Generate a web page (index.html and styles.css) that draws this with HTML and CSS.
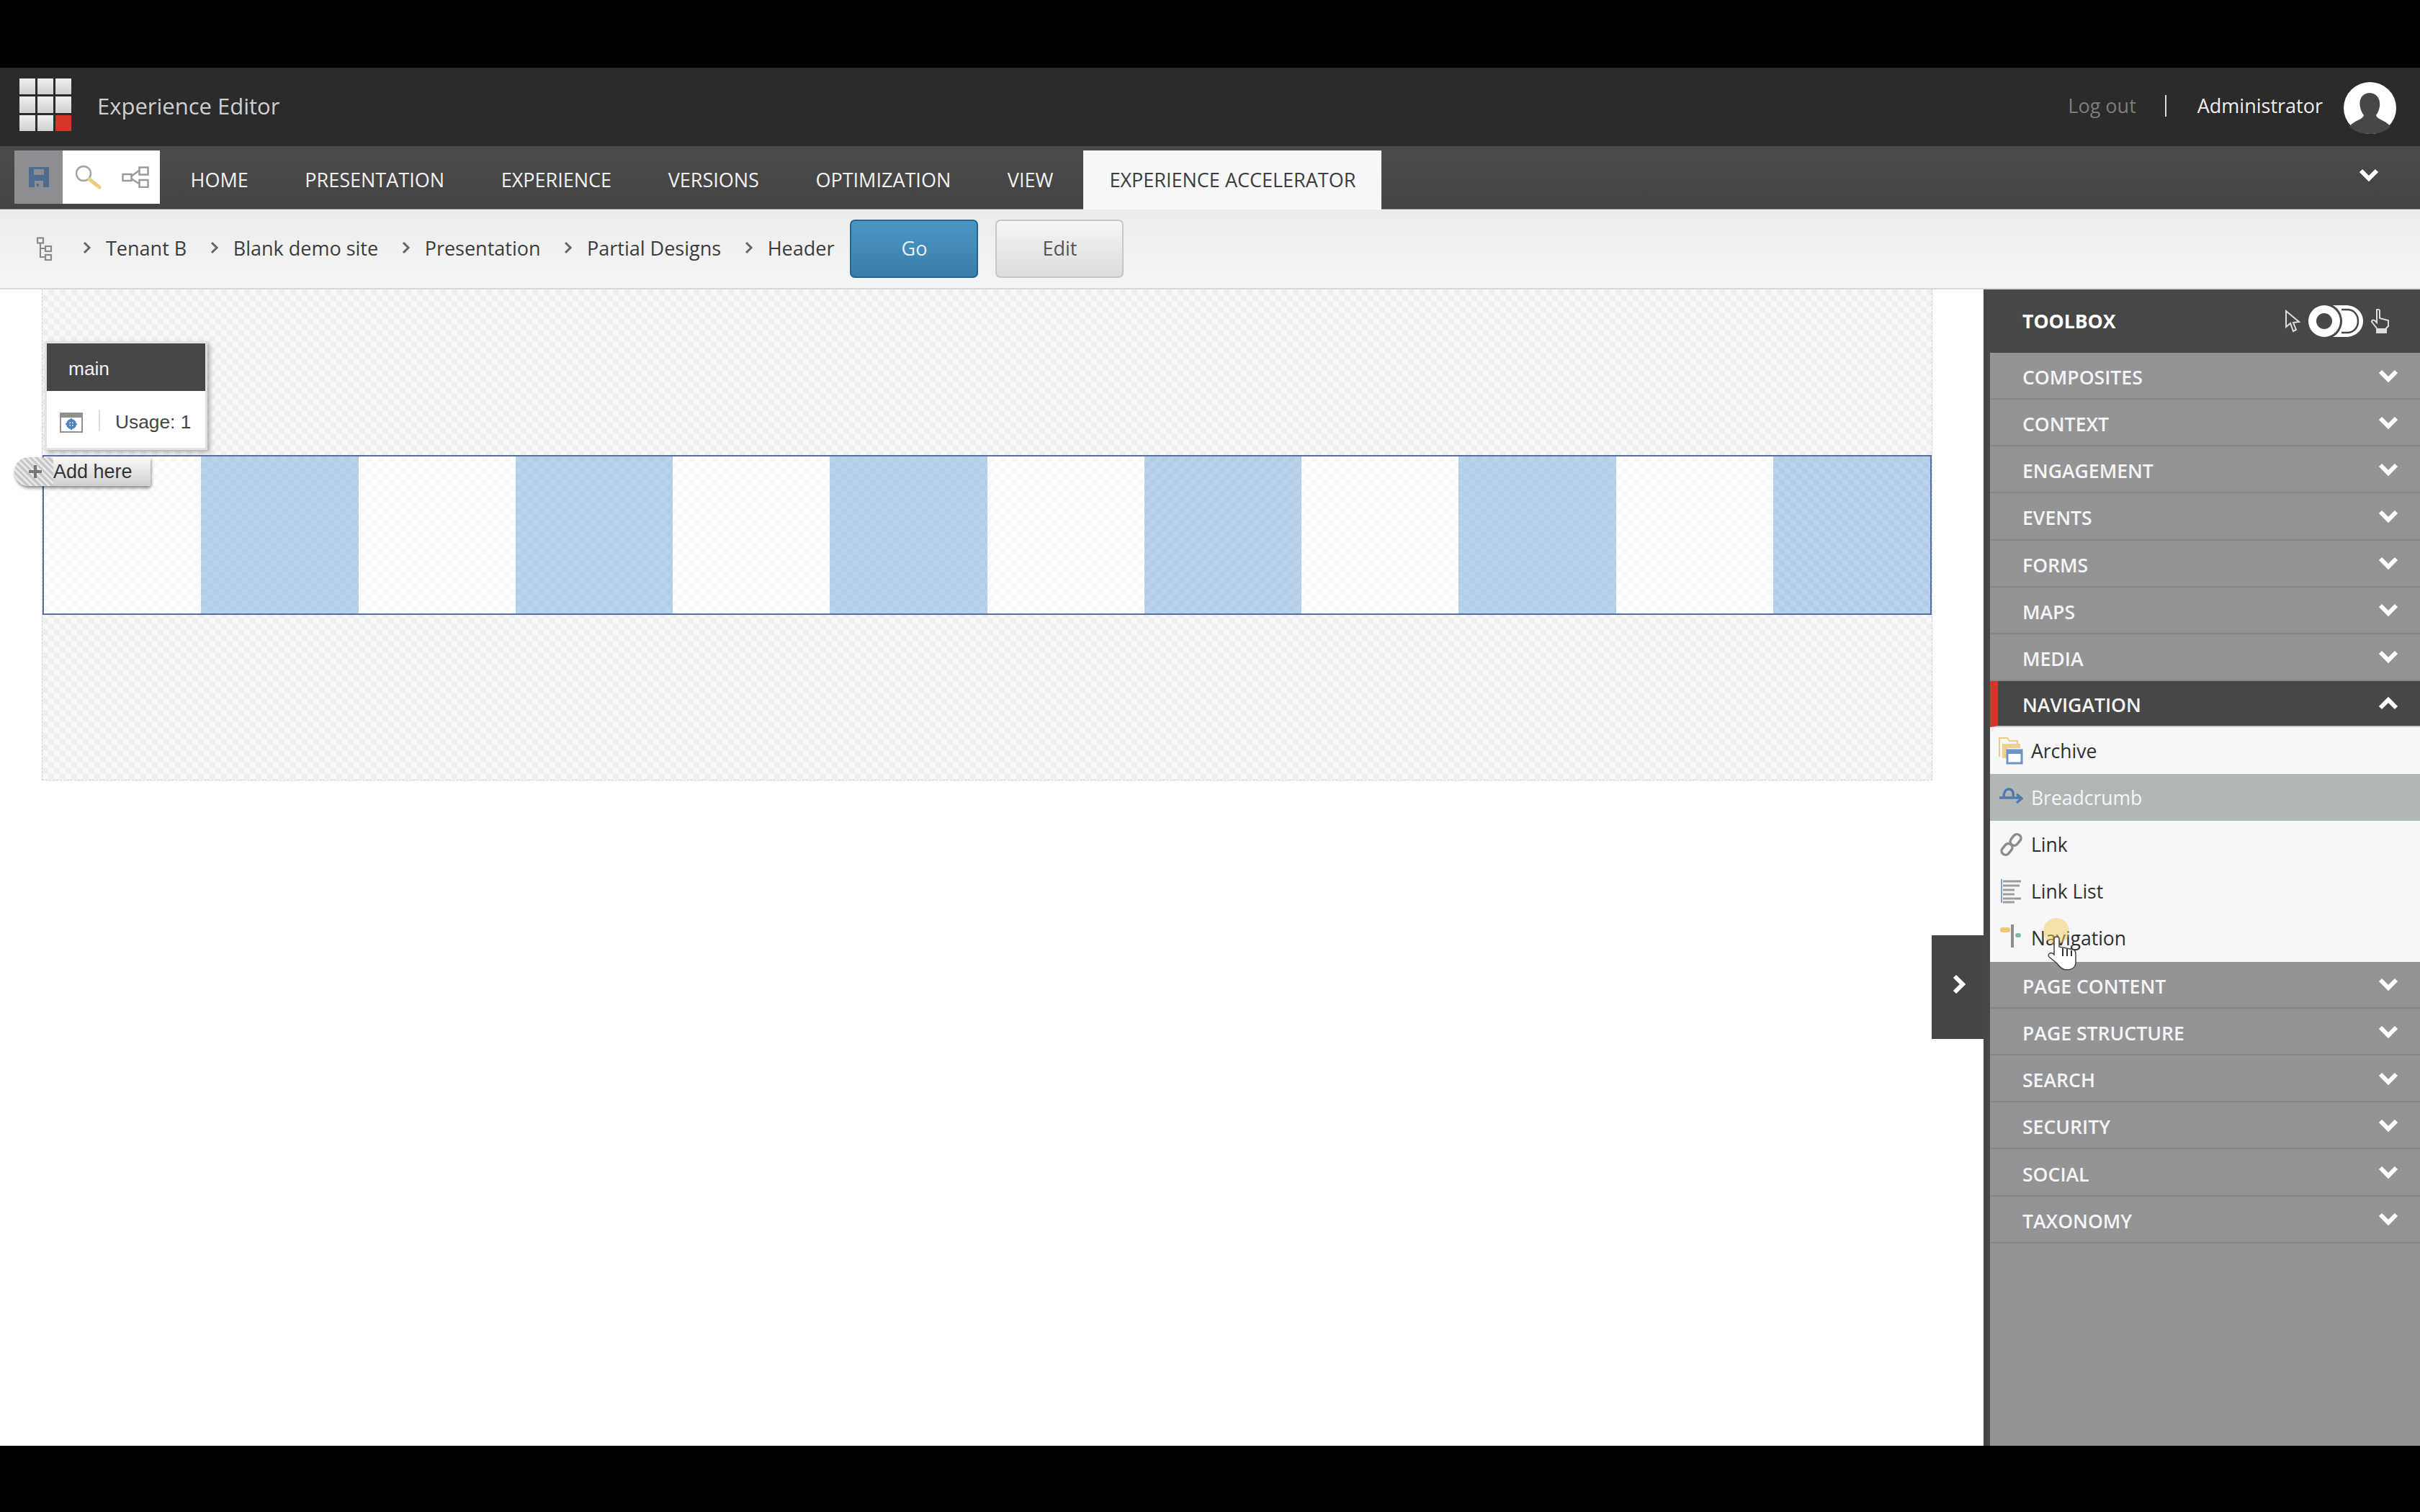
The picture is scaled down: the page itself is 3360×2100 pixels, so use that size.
FILE: index.html
```html
<!DOCTYPE html>
<html>
<head>
    <meta charset="utf-8">
    <title>Experience Editor</title>
    <link rel="stylesheet" href="styles.css">
</head>
<body>
    <svg class="sprites" width="0" height="0">
        <symbol id="chevDown" viewBox="0 0 28 20"><path d="M3 4 L14 15 L25 4" fill="none" stroke="#fff" stroke-width="6"/></symbol>
        <symbol id="chevUp" viewBox="0 0 28 20"><path d="M3 16 L14 5 L25 16" fill="none" stroke="#fff" stroke-width="6"/></symbol>
        <symbol id="crumbArrow" viewBox="0 0 14 18"><path d="M3 2 L10 9 L3 16" fill="none" stroke="#666" stroke-width="3"/></symbol>
    </svg>

    <div class="app">
        <header class="topBar">
            <div class="logo">
                <i></i><i></i><i></i><i></i><i></i><i></i><i></i><i></i><i class="red"></i>
            </div>
            <span class="appTitle">Experience Editor</span>
            <div class="userArea">
                <a class="logout">Log out</a>
                <span class="pipe"></span>
                <span class="userName">Administrator</span>
                <svg class="avatar" viewBox="0 0 73 72">
                    <ellipse cx="36.5" cy="36" rx="36.5" ry="36" fill="#fff"/>
                    <path d="M8 62 C14 53 26 53 28 46 C20 36 19 16 36 15 C53 16 53 36 45 46 C47 53 59 53 65 62 C58 69 47 72 36.500 72 C26 72 15 69 8 62 Z" fill="#474747"/>
                </svg>
            </div>
        </header>

        <nav class="ribbon">
            <div class="quickBar">
                <div class="quickSave">
                    <svg width="28" height="28" viewBox="0 0 28 28">
                        <path d="M0 0 H28 V28 H20 V19 H8 V28 H0 Z M7 3 V11 H21 V3 Z" fill="#4f6d90" fill-rule="evenodd"/>
                        <rect x="11" y="23" width="3" height="4" fill="#4f6d90"/>
                    </svg>
                </div>
                <div class="quickTools">
                    <svg width="36" height="34" viewBox="0 0 36 34">
                        <circle cx="11" cy="12" r="10" fill="none" stroke="#a3a3a3" stroke-width="2.500"/>
                        <path d="M19 20 L33 31" stroke="#e9cd80" stroke-width="5" stroke-linecap="round"/>
                    </svg>
                    <svg width="38" height="30" viewBox="0 0 38 30">
                        <g fill="none" stroke="#9a9a9a" stroke-width="2.500">
                            <rect x="1.500" y="11" width="12" height="9"/>
                            <rect x="24.500" y="1.500" width="12" height="10"/>
                            <rect x="24.500" y="19" width="12" height="10"/>
                            <path d="M13 14 L24 6 M13 17 L24 24"/>
                        </g>
                    </svg>
                </div>
            </div>
            <div class="tabs">
                <a class="tab">HOME</a>
                <a class="tab">PRESENTATION</a>
                <a class="tab">EXPERIENCE</a>
                <a class="tab">VERSIONS</a>
                <a class="tab">OPTIMIZATION</a>
                <a class="tab">VIEW</a>
                <a class="tab active">EXPERIENCE ACCELERATOR</a>
            </div>
            <svg class="ribbonToggle"><use href="#chevDown"/></svg>
        </nav>

        <div class="crumbBar">
            <svg class="treeIcon" width="24" height="34" viewBox="0 0 24 34">
                <g fill="none" stroke="#8a8a8a" stroke-width="2.200">
                    <rect x="2" y="1.500" width="8" height="7"/>
                    <rect x="13" y="13" width="8" height="7"/>
                    <rect x="13" y="25" width="8" height="7"/>
                    <path d="M6 9 V28 H13 M6 16 H13"/>
                </g>
            </svg>
            <div class="crumbs">
                <span class="crumb"><svg><use href="#crumbArrow"/></svg>Tenant B</span>
                <span class="crumb"><svg><use href="#crumbArrow"/></svg>Blank demo site</span>
                <span class="crumb"><svg><use href="#crumbArrow"/></svg>Presentation</span>
                <span class="crumb"><svg><use href="#crumbArrow"/></svg>Partial Designs</span>
                <span class="crumb"><svg><use href="#crumbArrow"/></svg>Header</span>
            </div>
            <button class="btn btnGo">Go</button>
            <button class="btn btnEdit">Edit</button>
        </div>

        <div class="workspace">
            <main class="canvas">
                <div class="partial">
                    <div class="placeholder">
                        <i></i><i></i><i></i><i></i><i></i><i></i><i></i><i></i><i></i><i></i><i></i><i></i>
                    </div>
                    <div class="chromeTip">
                        <div class="chromeTitle">main</div>
                        <div class="chromeBody">
                            <svg width="32" height="28" viewBox="0 0 32 28">
                                <rect x="1" y="1" width="30" height="26" fill="#fff" stroke="#8f8f8f" stroke-width="2"/>
                                <rect x="1" y="1" width="30" height="6" fill="#8f8f8f"/>
                                <circle cx="16" cy="16" r="5" fill="none" stroke="#4f83c4" stroke-width="4"/>
                                <path d="M16 8 V24 M8 16 H24" stroke="#4f83c4" stroke-width="2"/>
                            </svg>
                            <span class="chromeSep"></span>
                            <span>Usage: 1</span>
                        </div>
                    </div>
                    <div class="addHere">
                        <span class="addHatch"><svg width="20" height="20" viewBox="0 0 20 20"><path d="M10 1 V19 M1 10 H19" stroke="#777" stroke-width="4"/></svg></span>
                        Add here
                    </div>
                </div>
            </main>

            <aside class="toolbox">
                <div class="toolboxHead">
                    <span>TOOLBOX</span>
                    <div class="modeSwitch">
                        <svg width="22" height="32" viewBox="0 0 22 32">
                            <path d="M2 2 V24 L8 19 L12 30 L16 28 L12 18 L20 17 Z" fill="#474747" stroke="#ddd" stroke-width="2"/>
                        </svg>
                        <svg width="76" height="44" viewBox="0 0 76 44">
                            <path d="M22 0 H52 C66 0 76 10 76 22 C76 34 66 44 52 44 H22 Z" fill="#fff"/>
                            <path d="M46 6 H54 C63 6 69 13 69 22 C69 31 63 38 54 38 H46" fill="none" stroke="#474747" stroke-width="2.500"/>
                            <circle cx="22" cy="22" r="25" fill="#474747"/>
                            <circle cx="22" cy="22" r="22" fill="#fff"/>
                            <circle cx="22" cy="22" r="11" fill="#474747"/>
                        </svg>
                        <svg width="26" height="34" viewBox="0 0 26 34">
                            <path d="M8 1 C10 0 12 1 12 3 V13 L24 16 V24 L21 27 V33 H8 V27 L1 18 C1 15 4 15 6 17 L8 19 Z" fill="none" stroke="#ddd" stroke-width="2"/>
                            <rect x="8" y="27" width="13" height="6" fill="#ddd"/>
                        </svg>
                    </div>
                </div>
                <div class="section"><span>COMPOSITES</span><svg><use href="#chevDown"/></svg></div>
                <div class="section"><span>CONTEXT</span><svg><use href="#chevDown"/></svg></div>
                <div class="section"><span>ENGAGEMENT</span><svg><use href="#chevDown"/></svg></div>
                <div class="section"><span>EVENTS</span><svg><use href="#chevDown"/></svg></div>
                <div class="section"><span>FORMS</span><svg><use href="#chevDown"/></svg></div>
                <div class="section"><span>MAPS</span><svg><use href="#chevDown"/></svg></div>
                <div class="section"><span>MEDIA</span><svg><use href="#chevDown"/></svg></div>
                <div class="section open"><span>NAVIGATION</span><svg><use href="#chevUp"/></svg></div>
                <div class="rendering">
                    <svg width="34" height="40" viewBox="0 0 34 40">
                        <path d="M1 28 V2 H12 L15 6 H26 V14" fill="none" stroke="#eccb8c" stroke-width="2"/>
                        <path d="M5 30 V10 H30 V16 H12 V30 Z" fill="#f0cf90"/>
                        <rect x="12" y="19" width="20" height="18" fill="#fff" stroke="#6d94c8" stroke-width="3"/>
                        <rect x="12" y="19" width="20" height="5" fill="#6d94c8"/>
                    </svg>
                    Archive
                </div>
                <div class="rendering selected">
                    <svg width="34" height="40" viewBox="0 0 34 40">
                        <path d="M7 19 C7 12 10 8 14 8 C19 8 21 12 20 19" fill="none" stroke="#4f7ab0" stroke-width="3.500"/>
                        <path d="M1 20 H30" stroke="#4f7ab0" stroke-width="3.500"/>
                        <path d="M25 15 L32 21 L25 27" fill="none" stroke="#4f7ab0" stroke-width="3.500"/>
                    </svg>
                    Breadcrumb
                </div>
                <div class="rendering">
                    <svg width="34" height="40" viewBox="0 0 34 40">
                        <g fill="none" stroke="#8c8c8c" stroke-width="3.500">
                            <rect x="18" y="5" width="11" height="17" rx="5.500" transform="rotate(40 23.500 13.500)"/>
                            <rect x="6" y="18" width="11" height="17" rx="5.500" transform="rotate(40 11.500 26.500)"/>
                        </g>
                    </svg>
                    Link
                </div>
                <div class="rendering">
                    <svg width="34" height="40" viewBox="0 0 34 40">
                        <rect x="3" y="3" width="2" height="33" fill="#7ea4d8"/>
                        <path d="M6 6 H31 M6 12 H29 M6 18 H22 M6 24 H22 M6 30 H31 M6 35 H22" stroke="#9d9d9d" stroke-width="3"/>
                    </svg>
                    Link List
                </div>
                <div class="rendering">
                    <svg width="34" height="44" viewBox="0 0 34 44">
                        <rect x="17" y="3" width="4" height="32" fill="#8e8e8e"/>
                        <rect x="2" y="7" width="14" height="7" rx="3" fill="#eec878"/>
                        <rect x="23" y="15" width="8" height="6" rx="3" fill="#7fb8a2"/>
                    </svg>
                    Navigation
                </div>
                <div class="section"><span>PAGE CONTENT</span><svg><use href="#chevDown"/></svg></div>
                <div class="section"><span>PAGE STRUCTURE</span><svg><use href="#chevDown"/></svg></div>
                <div class="section"><span>SEARCH</span><svg><use href="#chevDown"/></svg></div>
                <div class="section"><span>SECURITY</span><svg><use href="#chevDown"/></svg></div>
                <div class="section"><span>SOCIAL</span><svg><use href="#chevDown"/></svg></div>
                <div class="section"><span>TAXONOMY</span><svg><use href="#chevDown"/></svg></div>
            </aside>

            <div class="collapseTab">
                <svg width="20" height="28" viewBox="0 0 20 28"><path d="M4 3 L15 14 L4 25" fill="none" stroke="#fff" stroke-width="6"/></svg>
            </div>

            <div class="clickGlow"></div>
            <svg class="pointer" width="40" height="48" viewBox="0 0 40 48">
                <path d="M9 4 C9 0 16 0 16 4 V15 L36 19 C38 20 39 22 39 25 V38 C38 44 34 47 27 47 C21 47 17 44 13 38 L2 29 C0 26 3 22 7 24 L9 26 Z" fill="#fff" stroke="#444" stroke-width="1.500"/>
                <path d="M21 17 V28 M27 18 V28 M33 20 V28" stroke="#333" stroke-width="2"/>
            </svg>
        </div>
    </div>
</body>
</html>
```

FILE: styles.css
```css
html, body {
    margin: 0;
    padding: 0;
    height: 100%;
    background: #000;
    overflow: hidden;
}

body {
    padding-top: 94px;
    box-sizing: border-box;
    font-family: "Open Sans", "Liberation Sans", sans-serif;
}

.sprites {
    position: absolute;
}

.app {
    height: 1914px;
    background: #fff;
    display: flex;
    flex-direction: column;
}

/* top bar */
.topBar {
    height: 109px;
    flex: none;
    background: #2b2b2b;
    display: flex;
    align-items: center;
    padding: 0 33px 0 27px;
}

.logo {
    width: 72px;
    height: 73px;
    margin-bottom: 6px;
    display: grid;
    grid-template-columns: repeat(3, 1fr);
    grid-template-rows: repeat(3, 1fr);
    gap: 3px;
}

.logo i {
    background: linear-gradient(#f0f0f0, #cfcfcf);
}

.logo i.red {
    background: #d5362a;
}

.appTitle {
    margin-left: 36px;
    margin-bottom: 4px;
    font-size: 31px;
    color: #cfcfcf;
}

.userArea {
    margin-left: auto;
    display: flex;
    align-items: center;
    font-size: 27px;
}

.logout {
    color: #7d7d7d;
    margin-bottom: 4px;
}

.pipe {
    width: 2px;
    height: 30px;
    margin: 0 43px 4px 40px;
    background: #ddd;
}

.userName {
    color: #f0f0f0;
    margin-bottom: 4px;
}

.avatar {
    width: 73px;
    height: 72px;
    margin-left: 29px;
    margin-top: 3px;
}

/* ribbon */
.ribbon {
    height: 88px;
    flex: none;
    box-sizing: border-box;
    background: linear-gradient(#4b4b4b, #434343);
    border-bottom: 1px solid #8b8b8b;
    display: flex;
    align-items: flex-end;
    padding-left: 20px;
}

.quickBar {
    height: 74px;
    margin-bottom: 7px;
    display: flex;
}

.quickSave {
    width: 67px;
    background: #8c8e91;
    display: flex;
    align-items: center;
    justify-content: center;
}

.quickTools {
    width: 135px;
    background: #fff;
    display: flex;
    align-items: center;
    justify-content: space-between;
    padding: 0 15px 0 18px;
    box-sizing: border-box;
}

.tabs {
    display: flex;
    margin-left: 6px;
    align-self: flex-end;
    gap: 5.600px;
}

.tab {
    height: 82px;
    padding: 0 36.500px;
    font-size: 27px;
    line-height: 82px;
    color: #f2f2f2;
    white-space: nowrap;
    margin-bottom: -1px;
}

.tab.active {
    padding: 0 36px;
    background: #f7f7f9;
    color: #3d3d3d;
}

.ribbonToggle {
    position: absolute;
    left: 3275px;
    top: 233px;
    width: 28px;
    height: 20px;
}

/* breadcrumb */
.crumbBar {
    height: 111px;
    flex: none;
    box-sizing: border-box;
    background: linear-gradient(#ececec, #f5f5f5);
    border-bottom: 2px solid #d8d8d8;
    display: flex;
    align-items: center;
    padding-left: 50px;
    font-size: 27px;
    color: #3c3c3c;
}

.crumbs {
    display: flex;
    gap: 31.500px;
    margin-left: 40px;
    margin-bottom: 3px;
}

.crumb {
    display: flex;
    align-items: center;
    gap: 19px;
    white-space: nowrap;
}

.crumb svg {
    width: 14px;
    height: 18px;
}

.btn {
    width: 178px;
    height: 81px;
    padding: 0 0 2px;
    border-radius: 7px;
    font-family: inherit;
    font-size: 27px;
}

.btnGo {
    margin-left: 22px;
    background: linear-gradient(#4b96c5, #3a7ea9);
    border: 2px solid #24638c;
    color: #e6f0f6;
}

.btnEdit {
    margin-left: 24px;
    background: linear-gradient(#f5f5f5, #dcdcdc);
    border: 2px solid #c6c6c6;
    color: #555;
}

/* canvas */
.workspace {
    flex: 1;
    display: flex;
    position: relative;
    min-height: 0;
}

.canvas {
    flex: 1;
    padding-left: 58px;
    padding-right: 71px;
}

.partial {
    position: relative;
    height: 682px;
    padding: 230px 0 229px;
    box-sizing: border-box;
    border: 1px dashed #d0d0d0;
    border-top: 0;
    background: repeating-conic-gradient(#eeeeee 0 25%, #f7f7f7 0 50%) 0 0 / 16px 16px;
}

.placeholder {
    height: 222px;
    box-sizing: border-box;
    border: 2px solid #566f9c;
    display: grid;
    grid-template-columns: repeat(12, 1fr);
    background: repeating-conic-gradient(#ffffff 0 25%, #f8f8f8 0 50%) 0 0 / 16px 16px;
}

.placeholder i:nth-child(even) {
    background: repeating-conic-gradient(#b2cee7 0 25%, #b9d3ea 0 50%) 0 0 / 16px 16px;
}

.chromeTip {
    position: absolute;
    left: 3px;
    top: 72px;
    width: 226px;
    height: 151px;
    box-sizing: border-box;
    background: #fff;
    border: 3px solid #e2e2e2;
    box-shadow: 3px 3px 6px rgba(0, 0, 0, .3);
    font-family: "Liberation Sans", Arial, sans-serif;
    font-size: 26.300px;
}

.chromeTitle {
    height: 66px;
    line-height: 70px;
    padding-left: 30px;
    background: #464646;
    color: #f2f2f2;
}

.chromeBody {
    height: 79px;
    box-sizing: border-box;
    padding: 8px 0 0 18px;
    display: flex;
    align-items: center;
    color: #444;
}

.chromeSep {
    width: 2px;
    height: 30px;
    margin: 0 21px 6px 22px;
    background: #ddd;
}

.addHere {
    position: absolute;
    left: -39px;
    top: 233px;
    width: 189px;
    height: 40px;
    display: flex;
    align-items: center;
    font-family: "Liberation Sans", Arial, sans-serif;
    font-size: 27px;
    color: #333;
    background: linear-gradient(#f8f8f8, #d0d0d0);
    border-radius: 20px 3px 3px 20px;
    box-shadow: 1px 3px 4px rgba(0, 0, 0, .45);
    overflow: hidden;
}

.addHatch {
    width: 54px;
    height: 40px;
    flex: none;
    display: flex;
    align-items: center;
    justify-content: center;
    padding-left: 4px;
    box-sizing: border-box;
    background: repeating-linear-gradient(45deg, #c8c8c8 0 3px, #e8e8e8 3px 6px);
}

/* toolbox */
.toolbox {
    width: 606px;
    flex: none;
    box-sizing: border-box;
    background: #949496;
    border-left: 9px solid #474747;
    color: #f5f5f5;
    font-size: 26.600px;
    font-weight: 600;
}

.toolboxHead {
    height: 88px;
    margin-left: -9px;
    padding-left: 54px;
    background: #474747;
    display: flex;
    align-items: center;
    justify-content: space-between;
    font-weight: 700;
    color: #fff;
}

.modeSwitch {
    display: flex;
    align-items: center;
    gap: 11px;
    margin-right: 42px;
}

.section {
    height: 65.150px;
    box-sizing: border-box;
    border-bottom: 2px solid #87878a;
    display: flex;
    align-items: center;
    justify-content: space-between;
    padding: 5px 30px 0 45px;
}

.section svg {
    width: 28px;
    height: 20px;
    margin-top: -5px;
}

.section.open {
    height: 64px;
    background: #474747;
    border-left: 11px solid #d5362a;
    border-bottom-color: #c8c8c8;
    padding-left: 34px;
}

.rendering {
    height: 65.200px;
    box-sizing: border-box;
    background: #f7f7f9;
    color: #2f2f2f;
    display: flex;
    align-items: center;
    font-weight: 400;
    font-size: 26.500px;
    padding-left: 12px;
    gap: 11px;
}

.rendering svg {
    width: 34px;
    flex: none;
}

.rendering.selected {
    background: #b1b6b6;
    color: #f5f5f5;
}

.collapseTab {
    position: absolute;
    left: 2682px;
    top: 897px;
    width: 72px;
    height: 144px;
    box-sizing: border-box;
    background: #454545;
    display: flex;
    align-items: center;
    justify-content: center;
    padding: 0 0 8px 4px;
}

.clickGlow {
    position: absolute;
    left: 2837px;
    top: 873px;
    width: 36px;
    height: 36px;
    border-radius: 50%;
    background: rgba(240, 205, 90, .5);
}

.pointer {
    position: absolute;
    left: 2843px;
    top: 898px;
}
```
